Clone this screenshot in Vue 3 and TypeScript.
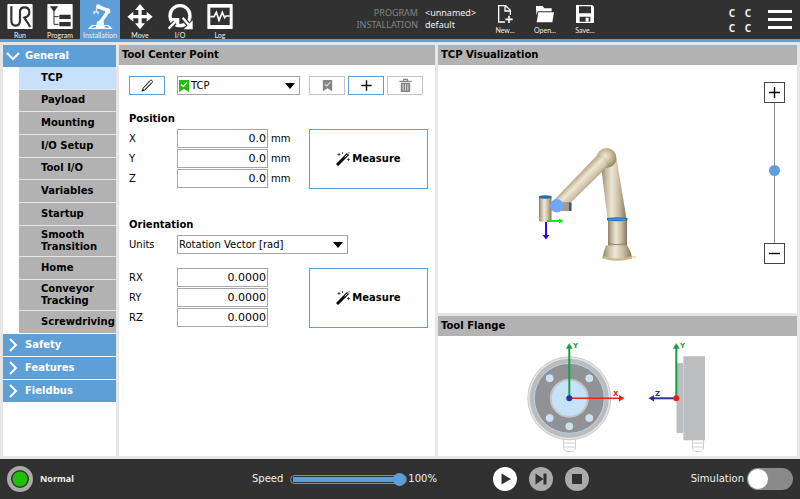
<script setup lang="ts">
import { ref } from 'vue'

interface Axis {
  name: string
  value: string
}

const tabs = ['Run', 'Program', 'Installation', 'Move', 'I/O', 'Log']
const activeTab = ref('Installation')

const generalItems = [
  'TCP', 'Payload', 'Mounting', 'I/O Setup', 'Tool I/O', 'Variables',
  'Startup', 'Smooth Transition', 'Home', 'Conveyor Tracking', 'Screwdriving',
]
const activeItem = ref('TCP')
const groups = ['Safety', 'Features', 'Fieldbus']

const position = ref<Axis[]>([
  { name: 'X', value: '0.0' },
  { name: 'Y', value: '0.0' },
  { name: 'Z', value: '0.0' },
])
const rotation = ref<Axis[]>([
  { name: 'RX', value: '0.0000' },
  { name: 'RY', value: '0.0000' },
  { name: 'RZ', value: '0.0000' },
])

const speed = ref(100)
const zoom = ref(52)
const simulation = ref(false)
const bolts = [[549.7, 378.3], [589.3, 378.3], [549.7, 418], [589.3, 418], [569.3, 426.3]]
</script>

<template>
  <div class="app">
    <header class="top">
      <nav class="tabs">
        <button
          v-for="tab in tabs"
          :key="tab"
          class="tab"
          :class="{ active: tab === activeTab }"
          @click="activeTab = tab"
        >
          <svg class="tab-icon" viewBox="0 0 120 96" aria-hidden="true">
            <template v-if="tab === 'Run'">
              <rect x="22" y="12" width="76" height="75" rx="3" fill="#fff" />
              <path d="M34 19V60Q34 77 47 77Q60 77 60 60V36Q60 22 73 22Q88 22 88 36Q88 50 73 53L91 81" fill="none" stroke="#313131" stroke-width="6.500" />
            </template>
            <template v-else-if="tab === 'Program'">
              <rect x="22" y="12" width="76" height="75" rx="2" fill="#fff" />
              <path d="M30 19H54L42 36Z" fill="#313131" />
              <path d="M42 34V73H56M42 50H56" fill="none" stroke="#313131" stroke-width="3" />
              <path d="M58 44H92V57H58ZM58 66H92V79H58Z" fill="#313131" />
            </template>
            <template v-else-if="tab === 'Installation'">
              <path d="M36 75H86L98 87H23Z" fill="#fff" />
              <path d="M39 78H49L46 83H33ZM73 78H83L89 83H76Z" fill="#5f9fd8" />
              <path d="M50 80V68Q50 63 57 63H65Q72 63 72 68V80Z" fill="#fff" />
              <path d="M62 66L83 36" stroke="#fff" stroke-width="10" />
              <path d="M83 31L55 20" stroke="#fff" stroke-width="10" />
              <circle cx="83" cy="33" r="8" fill="#fff" />
              <circle cx="55" cy="20" r="7" fill="#fff" />
              <path d="M49 25V35M41 36H55M42 35V43M54 35V43" stroke="#fff" stroke-width="3" />
            </template>
            <path
              v-else-if="tab === 'Move'"
              d="M60 12L75 30H65V45H80V35L98 50L80 65V55H65V70H75L60 88L45 70H55V55H40V65L22 50L40 35V45H55V30H45Z"
              fill="#fff"
            />
            <template v-else-if="tab === 'I/O'">
              <circle cx="60" cy="47" r="30" fill="none" stroke="#fff" stroke-width="10" />
              <path d="M24 88L45 67M68 53L88 77" stroke="#313131" stroke-width="15" />
              <path d="M26 86L46 65" stroke="#fff" stroke-width="7" />
              <path d="M32 54H58V80Z" fill="#fff" />
              <path d="M68 53L90 79" stroke="#fff" stroke-width="7" />
              <path d="M98 61V88H71Z" fill="#fff" />
            </template>
            <template v-else>
              <rect x="22" y="12" width="76" height="75" rx="2" fill="#fff" />
              <rect x="31" y="23" width="58" height="52" fill="#313131" />
              <path d="M31 50H42L49 37L57 61L67 37L74 53L78 48H89" fill="none" stroke="#fff" stroke-width="5" />
            </template>
          </svg>
          <span>{{ tab }}</span>
        </button>
      </nav>

      <dl class="files">
        <dt>PROGRAM</dt>
        <dd>&lt;unnamed&gt;</dd>
        <dt>INSTALLATION</dt>
        <dd>default</dd>
      </dl>

      <div class="file-actions">
        <button class="tab">
          <svg class="tab-icon" viewBox="0 0 120 81" aria-hidden="true">
            <path d="M76 45V31L62 17H41V66H60" fill="none" stroke="#fff" stroke-width="4" />
            <path d="M60 17V33H76" fill="none" stroke="#fff" stroke-width="4" />
            <path d="M72 47V69M61 58H83" stroke="#fff" stroke-width="5" />
          </svg>
          <span>New...</span>
        </button>
        <button class="tab">
          <svg class="tab-icon" viewBox="0 0 120 81" aria-hidden="true">
            <path d="M33 18H53L58 25H80V34H38L34 46Z" fill="#fff" />
            <path d="M40 37H87L82 67H35Z" fill="#fff" />
          </svg>
          <span>Open...</span>
        </button>
        <button class="tab">
          <svg class="tab-icon" viewBox="0 0 120 81" aria-hidden="true">
            <path d="M33 15H82L87 20V69H33Z" fill="#fff" />
            <path d="M42 19H78V40H42ZM44 50H76V65H44Z" fill="#313131" />
            <path d="M62 53H71V65H62Z" fill="#fff" />
          </svg>
          <span>Save...</span>
        </button>
      </div>

      <div class="checksum"><span>C</span><span>C</span><span>C</span><span>C</span></div>

      <button class="menu" aria-label="Menu"><i /><i /><i /></button>
    </header>

    <main class="body">
      <aside class="panel side">
        <button class="group">
          <svg viewBox="0 0 14 14" aria-hidden="true"><path d="M1 4L7 10L13 4" /></svg>General
        </button>
        <div class="sub">
          <button
            v-for="item in generalItems"
            :key="item"
            :class="{ current: item === activeItem }"
            @click="activeItem = item"
          >{{ item }}</button>
        </div>
        <div class="groups">
          <button v-for="group in groups" :key="group" class="group">
            <svg viewBox="0 0 14 14" aria-hidden="true"><path d="M4 1L10 7L4 13" /></svg>{{ group }}
          </button>
        </div>
      </aside>

      <section class="panel">
        <h2>Tool Center Point</h2>
        <div class="form">
          <div class="toolbar">
            <button class="tool" aria-label="Rename">
              <svg viewBox="0 0 16 16" aria-hidden="true">
                <path d="M2 14L3.500 10.500L10.800 2.600Q11.700 1.700 12.800 2.700Q13.900 3.800 13 4.800L5.500 12.600L2 14ZM4 10.300L10.500 3.500M5.500 12L12.500 5" fill="none" stroke="#222" stroke-width="1" />
                <path d="M2 14L3 11.500L4.500 13Z" fill="#111" />
              </svg>
            </button>
            <div class="drop with-mark">
              <select aria-label="Tool center point"><option>TCP</option></select>
              <svg class="mark" viewBox="0 0 10 12" aria-hidden="true">
                <path d="M0 0H10V12L5 9L0 12Z" fill="#1fbe08" />
                <path d="M2 4.500L4.200 6.500L8 2.500" fill="none" stroke="#fff" stroke-width="1.200" />
              </svg>
              <svg class="arrow" viewBox="0 0 10 6" aria-hidden="true"><path d="M0 0H10L5 6Z" /></svg>
            </div>
            <div class="actions">
              <button class="tool off" aria-label="Set as default" disabled>
                <svg viewBox="0 0 16 16" aria-hidden="true">
                  <path d="M3 2H13V14L8 11L3 14Z" fill="#858585" />
                  <path d="M5 6.500L7.200 8.500L11 4.500" fill="none" stroke="#ddd" stroke-width="1.200" />
                </svg>
              </button>
              <button class="tool" aria-label="Add">
                <svg viewBox="0 0 16 16" aria-hidden="true"><path d="M8 2.500V13.500M2.500 8H13.500" stroke="#111" stroke-width="1.500" /></svg>
              </button>
              <button class="tool off" aria-label="Delete" disabled>
                <svg viewBox="0 0 16 16" aria-hidden="true">
                  <path d="M1.500 3.500H14.500M6 3V1.500H10V3" fill="none" stroke="#858585" stroke-width="1.300" />
                  <path d="M3 5H13V15H3Z" fill="#858585" />
                  <path d="M5.500 6.500V13.500M8 6.500V13.500M10.500 6.500V13.500" stroke="#ddd" stroke-width="1" />
                </svg>
              </button>
            </div>
          </div>

          <h3>Position</h3>
          <div class="block">
            <div class="fields">
              <div v-for="axis in position" :key="axis.name" class="field">
                <label :for="'p' + axis.name">{{ axis.name }}</label>
                <input :id="'p' + axis.name" v-model="axis.value" type="text" />
                <span>mm</span>
              </div>
            </div>
            <button class="measure">
              <svg viewBox="0 0 14 14" aria-hidden="true">
                <path d="M1 13L12 2" stroke="#000" stroke-width="3" />
                <path d="M8.600 5.400L11.400 2.600" stroke="#fff" stroke-width="1" />
                <path d="M3 1V4M1.500 2.500H4.500M6.500 0V2M12.500 6V9M11 7.500H14M13 0V1.500" stroke="#333" stroke-width="0.800" />
              </svg>Measure
            </button>
          </div>

          <h3 class="second">Orientation</h3>
          <div class="field">
            <label for="units">Units</label>
            <div class="drop units">
              <select id="units"><option>Rotation Vector [rad]</option></select>
              <svg class="arrow" viewBox="0 0 10 6" aria-hidden="true"><path d="M0 0H10L5 6Z" /></svg>
            </div>
          </div>
          <div class="block rotation">
            <div class="fields">
              <div v-for="axis in rotation" :key="axis.name" class="field">
                <label :for="'r' + axis.name">{{ axis.name }}</label>
                <input :id="'r' + axis.name" v-model="axis.value" type="text" />
              </div>
            </div>
            <button class="measure">
              <svg viewBox="0 0 14 14" aria-hidden="true">
                <path d="M1 13L12 2" stroke="#000" stroke-width="3" />
                <path d="M8.600 5.400L11.400 2.600" stroke="#fff" stroke-width="1" />
                <path d="M3 1V4M1.500 2.500H4.500M6.500 0V2M12.500 6V9M11 7.500H14M13 0V1.500" stroke="#333" stroke-width="0.800" />
              </svg>Measure
            </button>
          </div>
        </div>
      </section>

      <div class="right">
        <section class="panel viz">
          <h2>TCP Visualization</h2>
          <svg class="scene" viewBox="438 65 359 248" role="img" aria-label="Robot arm">
            <defs>
              <linearGradient id="tube" x1="0" x2="1" y1="0" y2="0">
                <stop offset="0" stop-color="#8d826c" />
                <stop offset="0.2" stop-color="#c6baa0" />
                <stop offset="0.42" stop-color="#efe8d8" />
                <stop offset="0.7" stop-color="#c9bda3" />
                <stop offset="1" stop-color="#83775f" />
              </linearGradient>
              <linearGradient id="fore" gradientUnits="userSpaceOnUse" x1="575" y1="176" x2="588" y2="189">
                <stop offset="0" stop-color="#a59978" />
                <stop offset="0.4" stop-color="#eee6d2" />
                <stop offset="0.75" stop-color="#cfc3a6" />
                <stop offset="1" stop-color="#8a7e64" />
              </linearGradient>
              <radialGradient id="ball" cx="0.45" cy="0.4" r="0.6">
                <stop offset="0" stop-color="#f1ead8" />
                <stop offset="0.5" stop-color="#cbbd9a" />
                <stop offset="1" stop-color="#918564" />
              </radialGradient>
            </defs>
            <path d="M628 257H636" stroke="#e9d9a0" stroke-width="1.500" />
            <path d="M606 245.500H627.500L631 253L632 258Q617 263 602.500 258L603.500 253Z" fill="url(#tube)" />
            <path d="M602.500 256Q617 261 632 256V258.500Q617 263 602.500 258.500Z" fill="#c9ba8c" />
            <path d="M608 220H627V245.500Q617 248 608 245.500Z" fill="url(#tube)" />
            <path d="M608 243.500Q617 246 627 243.500" fill="none" stroke="#8d826c" />
            <path d="M601 165L607.500 219H626.500L616.500 158Z" fill="url(#tube)" />
            <path d="M607 218Q617 216.500 627.500 218V220.500Q617 222 607 220.500Z" fill="#2376bd" />
            <path d="M609 219.500Q617 218.500 625 219.500" fill="none" stroke="#6fa6d3" stroke-width="0.800" />
            <circle cx="606.500" cy="158" r="10" fill="url(#ball)" />
            <path d="M553 201L597 155.500Q603 155 608 166L566 207Z" fill="url(#fore)" />
            <path d="M546 202H557V211H546Z" fill="#cfc4aa" />
            <path d="M558 203L565 202H570V211H558Z" fill="#a79c83" />
            <path d="M569 202.500H571.500V211H569Z" fill="#22598f" />
            <path d="M539 197H551.500V221Q545 223.500 539 221Z" fill="url(#tube)" />
            <path d="M539 196Q545 194.500 551.500 196V198Q545 199.500 539 198Z" fill="#286da8" />
            <circle cx="556.800" cy="205.700" r="6.800" fill="#70a7fa" />
            <path d="M537 218H540" stroke="#e9d9a0" />
            <path d="M547 221H560" stroke="#08ee08" stroke-width="2" />
            <path d="M559 218.500L563.500 221L559 223.500Z" fill="#08ee08" />
            <path d="M546 222V236" stroke="#3208ef" stroke-width="2" />
            <path d="M542.500 235H549.500L546 239.500Z" fill="#3208ef" />
          </svg>
          <div class="zoomer">
            <button aria-label="Zoom in"><svg viewBox="0 0 12 12"><path d="M6 0V12M0 6H12" /></svg></button>
            <input v-model.number="zoom" type="range" min="0" max="100" aria-label="Zoom" />
            <button aria-label="Zoom out"><svg viewBox="0 0 12 12"><path d="M0 6H12" /></svg></button>
          </div>
        </section>

        <section class="panel">
          <h2>Tool Flange</h2>
          <svg class="scene" viewBox="438 336 359 120" role="img" aria-label="Tool flange axes">
            <g fill="#fff" stroke="#cfcfcf">
              <path d="M563.500 438V449L566 451.500H573L575.500 449V438ZM563.500 443H575.500M563.500 447H575.500" />
              <path d="M692.500 438V449L695 451.500H701L703.500 449V438ZM692.500 443H703.500M692.500 447H703.500" />
            </g>
            <circle cx="569.300" cy="398.300" r="41.500" fill="#e3e3e3" stroke="#cbcbcb" />
            <circle cx="569.300" cy="398.300" r="39.500" fill="#bbbcbd" />
            <circle cx="569.300" cy="398.300" r="35" fill="#919295" stroke="#b9d4ec" />
            <circle cx="569.300" cy="398.300" r="18.500" fill="#c6e2f9" stroke="#c4c5c6" stroke-width="2" />
            <circle v-for="([x, y], i) in bolts" :key="i" :cx="x" :cy="y" r="3.500" fill="#c6e2f9" stroke="#dedede" />
            <rect x="676.500" y="363" width="7" height="70" rx="1" fill="#bcbdbe" />
            <rect x="684" y="356.300" width="21" height="84" fill="#bcbdbe" />
            <path d="M683.700 356.300V440.300" stroke="#b5d0e8" />
            <g fill="#13a045" stroke="#13a045">
              <path d="M569.300 398V348M676.300 398V348" stroke-width="2" />
              <path d="M566.300 348.500L569.300 343.500L572.300 348.500ZM673.300 348.500L676.300 343.500L679.300 348.500Z" stroke-width="0.500" />
            </g>
            <path d="M569 398.300H620" stroke="#ed2118" stroke-width="1.500" />
            <path d="M619 395L624.500 398.300L619 401.500Z" fill="#ed2118" />
            <path d="M676 398.300H653" stroke="#27359b" stroke-width="2" />
            <path d="M654 395L648.500 398.300L654 401.500Z" fill="#27359b" />
            <circle cx="569.300" cy="398.300" r="3" fill="#27359b" />
            <circle cx="676.300" cy="398.300" r="3" fill="#ed2118" />
            <g class="axis-name">
              <text x="573" y="348" fill="#13a045">Y</text>
              <text x="680" y="348" fill="#13a045">Y</text>
              <text x="613" y="396" fill="#ed2118">X</text>
              <text x="655" y="396" fill="#27359b">Z</text>
            </g>
          </svg>
        </section>
      </div>
    </main>

    <footer class="bottom">
      <div class="status">
        <span class="led" />
        <strong>Normal</strong>
      </div>
      <div class="speed">
        <label for="speed">Speed</label>
        <input
          id="speed"
          v-model.number="speed"
          type="range"
          min="0"
          max="100"
          :style="{ '--fill': speed + '%' }"
        />
        <output for="speed">{{ speed }}%</output>
      </div>
      <div class="run">
        <button class="play" aria-label="Play">
          <svg viewBox="0 0 24 24"><path d="M8.500 6.500L18 12L8.500 17.500Z" /></svg>
        </button>
        <button aria-label="Step">
          <svg viewBox="0 0 24 24"><path d="M6.500 6.500L14.500 12L6.500 17.500ZM14.500 6.500H17.500V17.500H14.500Z" /></svg>
        </button>
        <button aria-label="Stop">
          <svg viewBox="0 0 24 24"><path d="M7 7H17V17H7Z" /></svg>
        </button>
        <label class="sim">
          <span>Simulation</span>
          <input v-model="simulation" type="checkbox" role="switch" />
        </label>
      </div>
    </footer>
  </div>
</template>

<style>
body {
  margin: 0;
}
</style>

<style scoped>
.app {
  --dark: #313131;
  --blue: #5f9fd8;
  --grey: #b2b2b2;
  display: flex;
  flex-direction: column;
  min-height: 100vh;
  background: #e6e6e6;
  color: #000;
  font: 10px/12px "DejaVu Sans", Verdana, sans-serif;
}
.app *,
.app *::before {
  box-sizing: border-box;
}
button,
input,
select {
  margin: 0;
  padding: 0;
  border: 0;
  border-radius: 0;
  background: none;
  color: inherit;
  font: inherit;
}
svg {
  display: block;
}

/* Header */
.top {
  display: flex;
  align-items: flex-start;
  border-bottom: 3px solid var(--blue);
  background: var(--dark);
  color: #f0f0f0;
}
.tabs,
.file-actions {
  display: flex;
}
.tab {
  display: flex;
  flex-direction: column;
  align-items: center;
  width: 40px;
  height: 39px;
  font: 7px/7px Lato, sans-serif;
}
.tab.active {
  background: var(--blue);
}
.tab-icon {
  width: 40px;
  height: 32px;
}
.files {
  display: grid;
  grid-template-columns: auto 60px;
  gap: 0 7px;
  margin: 7px 0 0 auto;
  font: 9px/12px "Noto Sans", sans-serif;
}
.files dt {
  color: #858585;
  text-align: right;
}
.files dd {
  margin: 0;
}
.file-actions .tab {
  height: 34px;
}
.file-actions .tab-icon {
  height: 27px;
}
.checksum {
  display: grid;
  grid-template-columns: 16px 16px;
  grid-auto-rows: 15px;
  margin: 6px 12px 0 119px;
  font: bold 10px/15px "Noto Sans", sans-serif;
  text-align: center;
}
.menu {
  display: grid;
  gap: 5px;
  width: 24px;
  margin: 10px 8px 0 0;
}
.menu i {
  height: 3px;
  background: #fff;
}

/* Body */
.body {
  display: grid;
  flex: 1;
  grid-template-columns: 113px 316fr 359fr;
  gap: 3px;
  padding: 3px;
}
.panel {
  position: relative;
  background: #fff;
}
h2 {
  margin: 0;
  padding: 0 3px;
  background: var(--grey);
  font-size: 10px;
  line-height: 20px;
}
.side {
  font-weight: bold;
}
.group {
  display: flex;
  align-items: center;
  gap: 5px;
  width: 100%;
  height: 22px;
  padding: 0 3px;
  background: var(--blue);
  color: #fff;
}
.group svg {
  width: 14px;
  height: 14px;
  fill: none;
  stroke: #fff;
  stroke-width: 2;
}
.sub {
  display: grid;
  grid-template-rows: repeat(7, 22fr) 31fr 22fr 31fr 22fr;
  gap: 1px;
  height: 266px;
  margin: 0 0 1px 16px;
  background: #e6e6e6;
}
.sub button {
  padding: 0 0 0 22px;
  background: var(--grey);
  text-align: left;
}
.sub .current {
  background: #c6e1f9;
}
.groups {
  display: grid;
  gap: 1px;
}

/* Form */
.form {
  padding: 11px 7px 11px 10px;
}
.toolbar {
  display: grid;
  grid-template-columns: 36px 123px 1fr;
  column-gap: 12px;
}
.actions {
  display: flex;
  gap: 3px;
  margin-left: -3px;
}
.tool {
  display: grid;
  place-items: center;
  width: 36px;
  height: 19px;
  border: 1px solid var(--blue);
}
.tool svg {
  width: 15px;
  height: 15px;
}
.tool.off {
  border-color: #c4c4c4;
}
.drop {
  position: relative;
}
.drop select {
  width: 100%;
  height: 19px;
  padding: 0 0 0 1px;
  border: 1px solid #a6a6a6;
  appearance: none;
}
.drop.with-mark select {
  padding-left: 13px;
}
.mark {
  position: absolute;
  top: 4px;
  left: 2px;
  width: 10px;
  height: 12px;
}
.arrow {
  position: absolute;
  top: 7px;
  right: 5px;
  width: 10px;
  height: 6px;
}
.units {
  width: 171px;
}
h3 {
  margin: 18px 0 4px;
  font-size: 10px;
  line-height: 12px;
}
.second {
  margin-top: 30px;
}
.block {
  display: grid;
  grid-template-columns: 180px 1fr;
}
.rotation {
  margin-top: 14px;
}
.fields {
  display: grid;
  gap: 1px;
  align-content: start;
}
.field {
  display: flex;
  align-items: center;
}
.field label {
  width: 48px;
}
.field input {
  width: 91px;
  height: 19px;
  padding: 0 1px;
  border: 1px solid #a6a6a6;
  font-size: 11px;
  text-align: right;
}
.field span {
  margin-left: 3px;
}
.measure {
  display: flex;
  align-items: center;
  justify-content: center;
  gap: 2px;
  height: 60px;
  border: 1px solid var(--blue);
  font-weight: bold;
}
.measure svg {
  width: 14px;
  height: 14px;
}

/* Visuals */
.right {
  display: grid;
  grid-template-rows: auto 1fr;
  gap: 3px;
}
.scene {
  width: 100%;
}
.axis-name {
  font: bold 7px "DejaVu Sans", sans-serif;
}
.zoomer {
  position: absolute;
  top: 37px;
  right: 12px;
  display: flex;
  flex-direction: column;
  align-items: center;
}
.zoomer button {
  display: grid;
  place-items: center;
  width: 21px;
  height: 21px;
  border: 1px solid #444;
}
.zoomer svg {
  width: 11px;
  height: 11px;
  stroke: #000;
  stroke-width: 1.500;
}
.zoomer input {
  width: 11px;
  height: 140px;
  background: linear-gradient(#8a8a8a, #8a8a8a) center / 1px 100% no-repeat;
  appearance: none;
  direction: rtl;
  writing-mode: vertical-lr;
}
.zoomer input::-webkit-slider-thumb {
  width: 11px;
  height: 11px;
  border-radius: 50%;
  background: var(--blue);
  appearance: none;
}

/* Footer */
.bottom {
  display: grid;
  grid-template-columns: 252fr 241fr 307fr;
  align-items: center;
  height: 40px;
  background: var(--dark);
  color: #f0f0f0;
}
.status {
  display: flex;
  align-items: center;
  gap: 7px;
  padding-left: 7px;
  font: 9px/12px "Noto Sans", sans-serif;
}
.led {
  width: 26px;
  height: 26px;
  border: 4px solid #ababab;
  border-radius: 50%;
  background: radial-gradient(circle, #1fbe08 7px, var(--dark) 8px);
}
.speed {
  display: flex;
  align-items: center;
  height: 12px;
}
.speed input {
  width: 117px;
  height: 9px;
  margin: 0 1px 0 7px;
  border: 1px solid #8f8f8f;
  border-radius: 5px;
  background: linear-gradient(to right, var(--blue) var(--fill), transparent 0) center / calc(100% - 4px) 5px no-repeat;
  appearance: none;
}
.speed input::-webkit-slider-thumb {
  width: 13px;
  height: 13px;
  border-radius: 50%;
  background: var(--blue);
  appearance: none;
}
.run {
  display: flex;
  align-items: center;
  gap: 12px;
  padding-right: 7px;
}
.run button {
  width: 24px;
  height: 24px;
  border-radius: 50%;
  background: #ababab;
}
.run .play {
  background: #fff;
}
.run svg {
  fill: var(--dark);
}
.sim {
  display: flex;
  align-items: center;
  gap: 3px;
  margin-left: auto;
}
.sim input {
  width: 46px;
  height: 22px;
  border-radius: 11px;
  background: #8a8a8a;
  appearance: none;
}
.sim input::before {
  content: "";
  display: block;
  width: 22px;
  height: 22px;
  border: 1px solid #8a8a8a;
  border-radius: 50%;
  background: #fff;
}
.sim input:checked::before {
  margin-left: auto;
}
</style>
